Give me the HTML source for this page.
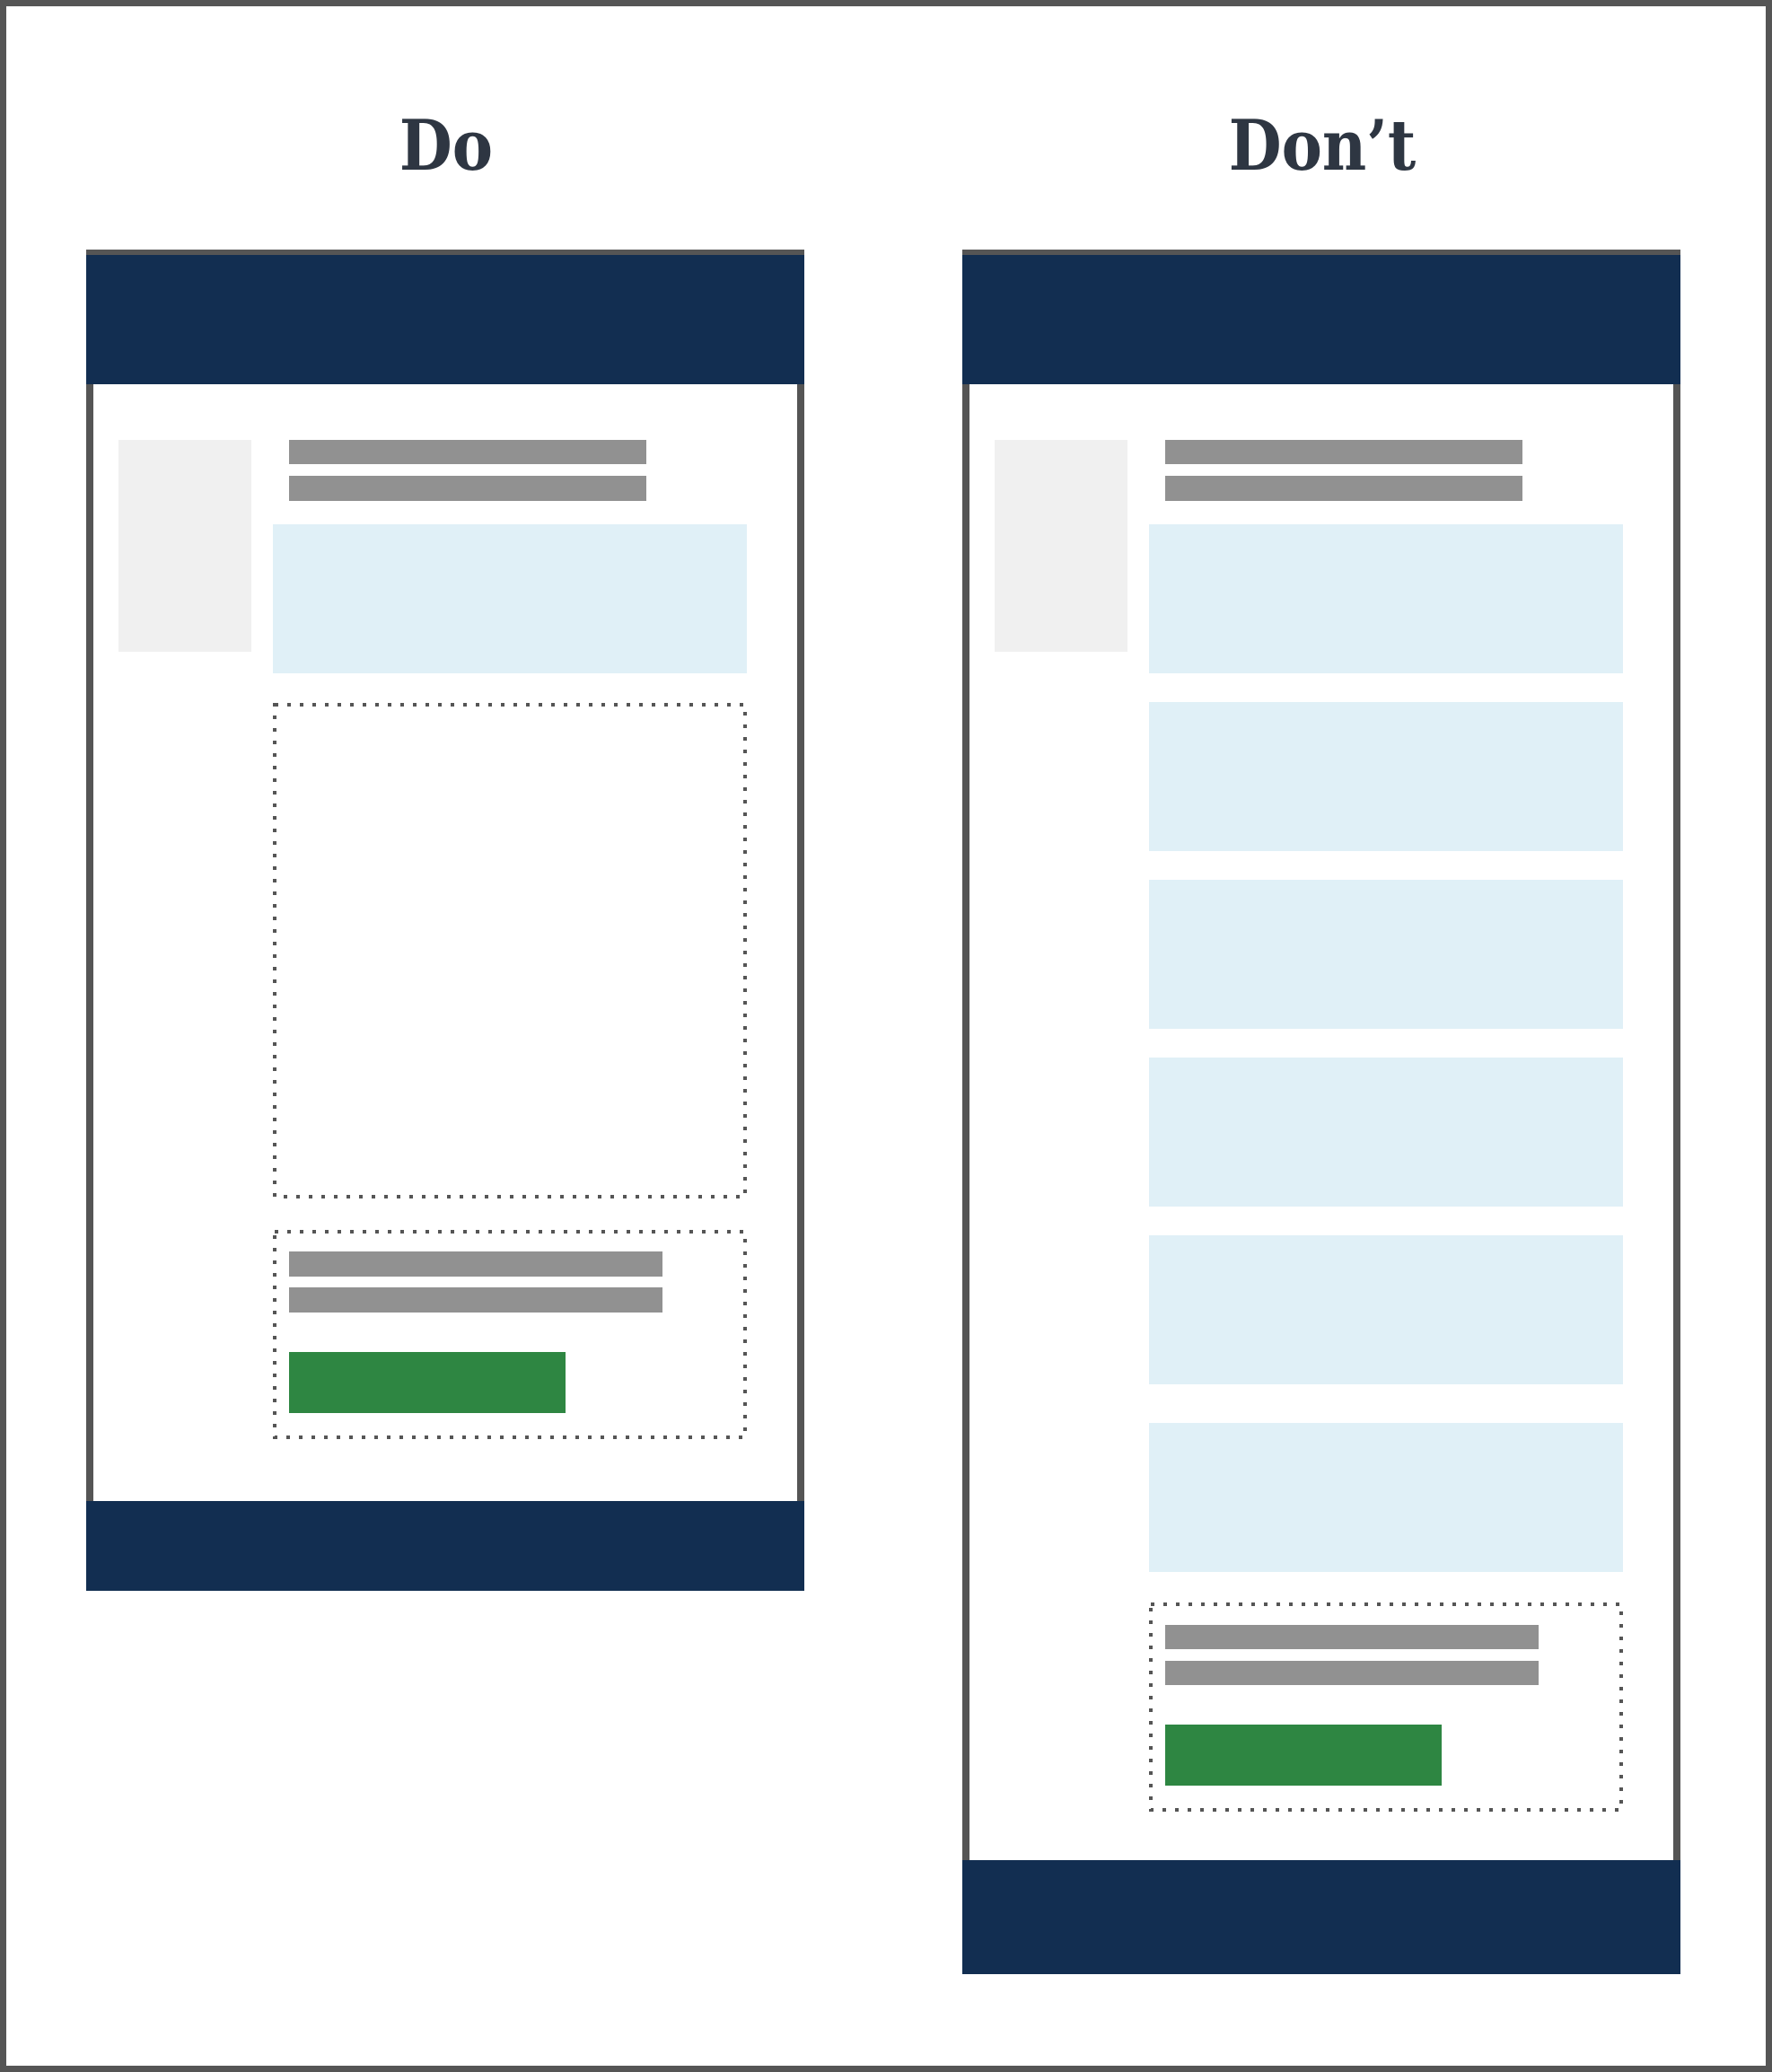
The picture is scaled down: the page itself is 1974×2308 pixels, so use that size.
<!DOCTYPE html>
<html><head><meta charset="utf-8"><style>
html,body{margin:0;padding:0;}
body{width:1974px;height:2308px;position:relative;background:#fff;overflow:hidden;}
.frame{position:absolute;left:0;top:0;width:1960px;height:2294px;border:7px solid #555;}
div.a{position:absolute;}
.navy{background:#122e51;}
.bar{background:#919191;}
.side{background:#f0f0f0;}
.lb{background:#e0f0f7;}
.green{background:#2e8642;}
.gb{background:#555;}
.t{position:absolute;font-family:"DejaVu Serif","Liberation Serif",serif;font-weight:bold;font-size:78px;color:#2e3642;line-height:1;transform:scaleX(0.87);transform-origin:center;text-align:center;width:400px;}
svg{position:absolute;left:0;top:0;}
</style></head><body>
<div class="frame"></div>
<div class="t" style="left:297px;top:124px;">Do</div>
<div class="t" style="left:1273px;top:124px;">Don’t</div>

<!-- Left phone -->
<div class="a gb" style="left:96px;top:278px;width:800px;height:1394px;"></div>
<div class="a" style="left:104px;top:428px;width:784px;height:1244px;background:#fff;"></div>
<div class="a navy" style="left:96px;top:284px;width:800px;height:144px;"></div>
<div class="a navy" style="left:96px;top:1672px;width:800px;height:100px;"></div>
<div class="a side" style="left:132px;top:490px;width:148px;height:236px;"></div>
<div class="a bar" style="left:322px;top:490px;width:398px;height:27px;"></div>
<div class="a bar" style="left:322px;top:530px;width:398px;height:28px;"></div>
<div class="a lb" style="left:304px;top:584px;width:528px;height:166px;"></div>
<div class="a bar" style="left:322px;top:1394px;width:416px;height:28px;"></div>
<div class="a bar" style="left:322px;top:1434px;width:416px;height:28px;"></div>
<div class="a green" style="left:322px;top:1506px;width:308px;height:68px;"></div>

<!-- Right phone -->
<div class="a gb" style="left:1072px;top:278px;width:800px;height:1794px;"></div>
<div class="a" style="left:1080px;top:428px;width:784px;height:1644px;background:#fff;"></div>
<div class="a navy" style="left:1072px;top:284px;width:800px;height:144px;"></div>
<div class="a navy" style="left:1072px;top:2072px;width:800px;height:127px;"></div>
<div class="a side" style="left:1108px;top:490px;width:148px;height:236px;"></div>
<div class="a bar" style="left:1298px;top:490px;width:398px;height:27px;"></div>
<div class="a bar" style="left:1298px;top:530px;width:398px;height:28px;"></div>
<div class="a lb" style="left:1280px;top:584px;width:528px;height:166px;"></div>
<div class="a lb" style="left:1280px;top:782px;width:528px;height:166px;"></div>
<div class="a lb" style="left:1280px;top:980px;width:528px;height:166px;"></div>
<div class="a lb" style="left:1280px;top:1178px;width:528px;height:166px;"></div>
<div class="a lb" style="left:1280px;top:1376px;width:528px;height:166px;"></div>
<div class="a lb" style="left:1280px;top:1585px;width:528px;height:166px;"></div>
<div class="a bar" style="left:1298px;top:1810px;width:416px;height:27px;"></div>
<div class="a bar" style="left:1298px;top:1850px;width:416px;height:27px;"></div>
<div class="a green" style="left:1298px;top:1921px;width:308px;height:68px;"></div>

<svg width="1974" height="2308" viewBox="0 0 1974 2308">
<g fill="none" stroke="#555" stroke-width="4" stroke-dasharray="4 10">
<rect x="306" y="785" width="524" height="548"/>
<rect x="306" y="1372" width="524" height="229"/>
<rect x="1282" y="1787" width="524" height="229"/>
</g>
</svg>
</body></html>
